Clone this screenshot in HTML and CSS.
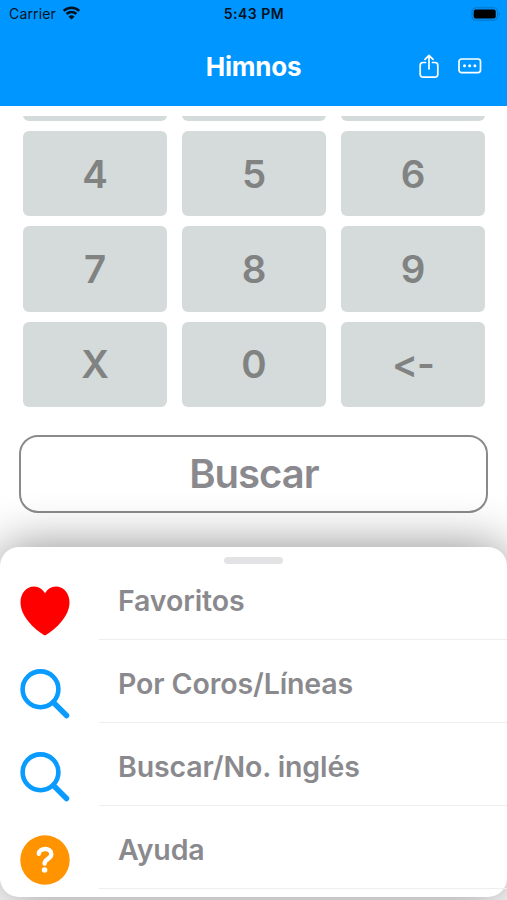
FILE: index.html
```html
<!DOCTYPE html>
<html lang="es">
<head>
    <meta charset="UTF-8">
    <meta name="viewport" content="width=device-width, initial-scale=1.0">
    <title>Himnos</title>
    <link rel="stylesheet" href="styles.css">
</head>
<body>
    <div class="header">
        <div class="status">
            <div class="carrier">
                <span>Carrier</span>
                <svg class="wifi" viewBox="0 0 18 14" width="19" height="14">
                    <path d="M1.2 4.9a11 11 0 0 1 15.6 0M4.1 8a7 7 0 0 1 9.8 0" fill="none" stroke="#001322" stroke-width="2.5"/>
                    <path d="M9 13.6L6 10.7a4.3 4.3 0 0 1 6 0z" fill="#001322"/>
                </svg>
            </div>
            <span class="time">5:43 PM</span>
            <svg class="battery" viewBox="0 0 30 14" width="30" height="14">
                <rect x="1" y=".8" width="25.5" height="12.4" rx="3.5" fill="none" stroke="#0575c5" stroke-width="1"/>
                <rect x="2.7" y="2.5" width="22" height="9" rx="2" fill="#000"/>
                <path d="M27.8 5v4a2.2 2.2 0 0 0 0-4z" fill="#0575c5"/>
            </svg>
        </div>
        <div class="navbar">
            <h2>Himnos</h2>
            <div class="actions">
                <svg viewBox="0 0 20 25" width="20" height="25">
                    <path d="M6.5 8.5H4a2.8 2.8 0 0 0-2.8 2.8v9.1A2.8 2.8 0 0 0 4 23.2h12a2.8 2.8 0 0 0 2.8-2.8v-9.1A2.8 2.8 0 0 0 16 8.5h-2.5M10 15V1.5M6 5.3l4-4 4 4"/>
                </svg>
                <svg viewBox="0 0 24 16" width="24" height="16">
                    <rect x="1" y="1" width="21.5" height="13.6" rx="2.5"/>
                    <g class="dots">
                        <circle cx="6.5" cy="7.8" r="1.5"/>
                        <circle cx="11.7" cy="7.8" r="1.5"/>
                        <circle cx="16.9" cy="7.8" r="1.5"/>
                    </g>
                </svg>
            </div>
        </div>
    </div>

    <div class="keypad">
        <div class="key"></div>
        <div class="key"></div>
        <div class="key"></div>
        <div class="key">4</div>
        <div class="key">5</div>
        <div class="key">6</div>
        <div class="key">7</div>
        <div class="key">8</div>
        <div class="key">9</div>
        <div class="key">X</div>
        <div class="key">0</div>
        <div class="key back">&lt;-</div>
    </div>

    <div class="search">Buscar</div>

    <div class="sheet">
        <div class="handle"></div>
        <div class="item">
            <svg class="icon" viewBox="0 0 50 50">
                <path d="M25 49.3C23.5 49.3 .5 34.5 .5 16.5C.5 7 6.5 .5 14 .5C19 .5 23 3.500 25 7.500C27 3.500 31 .5 36 .5C43.500 .5 49.500 7 49.500 16.500C49.500 34.500 26.500 49.300 25 49.300z" fill="#ff0000"/>
            </svg>
            <div class="label">Favoritos</div>
        </div>
        <div class="item">
            <svg class="icon lens" viewBox="0 0 50 50">
                <circle cx="20.5" cy="20.3" r="17.9"/>
                <path d="M33.5 33.5L46.5 46.5" stroke-width="5.5"/>
            </svg>
            <div class="label">Por Coros/Líneas</div>
        </div>
        <div class="item">
            <svg class="icon lens" viewBox="0 0 50 50">
                <circle cx="20.5" cy="20.3" r="17.9"/>
                <path d="M33.5 33.5L46.5 46.5" stroke-width="5.5"/>
            </svg>
            <div class="label">Buscar/No. inglés</div>
        </div>
        <div class="item">
            <svg class="icon" viewBox="0 0 50 50">
                <circle cx="25" cy="25" r="24.7" fill="#ff9300"/>
                <path d="M18.8 18.8C19.5 12.3 31.3 12.3 31.3 19.2C31.3 24 24.6 23.8 24.6 28.5" fill="none" stroke="#fff" stroke-width="4.4" stroke-linecap="round"/>
                <circle cx="24.6" cy="35" r="2.8" fill="#fff"/>
            </svg>
            <div class="label">Ayuda</div>
        </div>
    </div>
</body>
</html>
```
FILE: styles.css
```css
body {
    margin: 0;
    height: 900px;
    overflow: hidden;
    font-family: Inter, "Liberation Sans", sans-serif;
    background-color: #fff;
}

.header {
    height: 105.5px;
    background-color: #0096ff;
}

.status {
    display: grid;
    grid-template-columns: 1fr auto 1fr;
    align-items: center;
    height: 27px;
    padding: 0 6px 0 9px;
    color: #001322;
    font-size: 14px;
}

.carrier {
    display: flex;
    align-items: center;
    gap: 6px;
    letter-spacing: 0.15px;
}

.wifi {
    margin-top: -2px;
}

.time {
    margin-right: 2px;
    font-weight: 600;
    font-size: 14px;
    letter-spacing: 0.5px;
}

.battery {
    justify-self: end;
}

.navbar {
    display: grid;
    grid-template-columns: 1fr auto 1fr;
    align-items: center;
    height: 78px;
    padding: 0 25px;
}

.navbar h2 {
    grid-column: 2;
    margin: 0;
    color: #fff;
    font-size: 26px;
    font-weight: 700;
    letter-spacing: -0.25px;
}

.actions {
    display: flex;
    align-items: center;
    justify-content: flex-end;
    gap: 19px;
}

.actions svg {
    fill: none;
    stroke: #fff;
    stroke-width: 1.7;
    stroke-linecap: round;
    stroke-linejoin: round;
}

.actions .dots {
    fill: #fff;
    stroke: none;
}

.keypad {
    display: grid;
    grid-template-columns: repeat(3, 144px);
    grid-auto-rows: 85.2px;
    gap: 10px 15px;
    align-content: end;
    height: 290.7px;
    margin-top: 10.5px;
    padding-left: 23px;
    overflow: hidden;
}

.key {
    display: flex;
    justify-content: center;
    align-items: center;
    border-radius: 6px;
    background-color: #d5dada;
    color: #808382;
    font-size: 38.5px;
    font-weight: 600;
}

.back {
    font-variant-ligatures: none;
    font-feature-settings: "calt" 0;
    letter-spacing: -1px;
}

.search {
    display: flex;
    justify-content: center;
    align-items: center;
    box-sizing: border-box;
    width: 469px;
    height: 78px;
    margin: 28.3px 0 0 19.4px;
    border: 2px solid #8a8a8d;
    border-radius: 19px;
    color: #8a8a8e;
    font-size: 40px;
    font-weight: 600;
    letter-spacing: -1px;
}

.sheet {
    position: relative;
    box-sizing: border-box;
    height: 350px;
    margin-top: 34px;
    padding-top: 10px;
    border-radius: 19px;
    background-color: #fff;
    box-shadow: 0 0 50px rgba(0, 0, 0, 0.46);
}

.handle {
    width: 59px;
    height: 7px;
    margin: 0 auto;
    border-radius: 4px;
    background-color: #e3e3e6;
}

.item {
    display: flex;
    height: 83.1px;
}

.icon {
    width: 50px;
    height: 50px;
    margin: 22px 0 0 20px;
}

.lens {
    fill: none;
    stroke: #0a9bff;
    stroke-width: 4.6;
    stroke-linecap: round;
}

.label {
    flex: 1;
    box-sizing: border-box;
    height: 76px;
    margin-left: 29px;
    padding: 20px 0 0 19px;
    border-bottom: 1px solid #eeeeef;
    color: #8a8a8e;
    font-size: 28.5px;
    font-weight: 600;
    letter-spacing: -0.12px;
    line-height: 34px;
}
```
